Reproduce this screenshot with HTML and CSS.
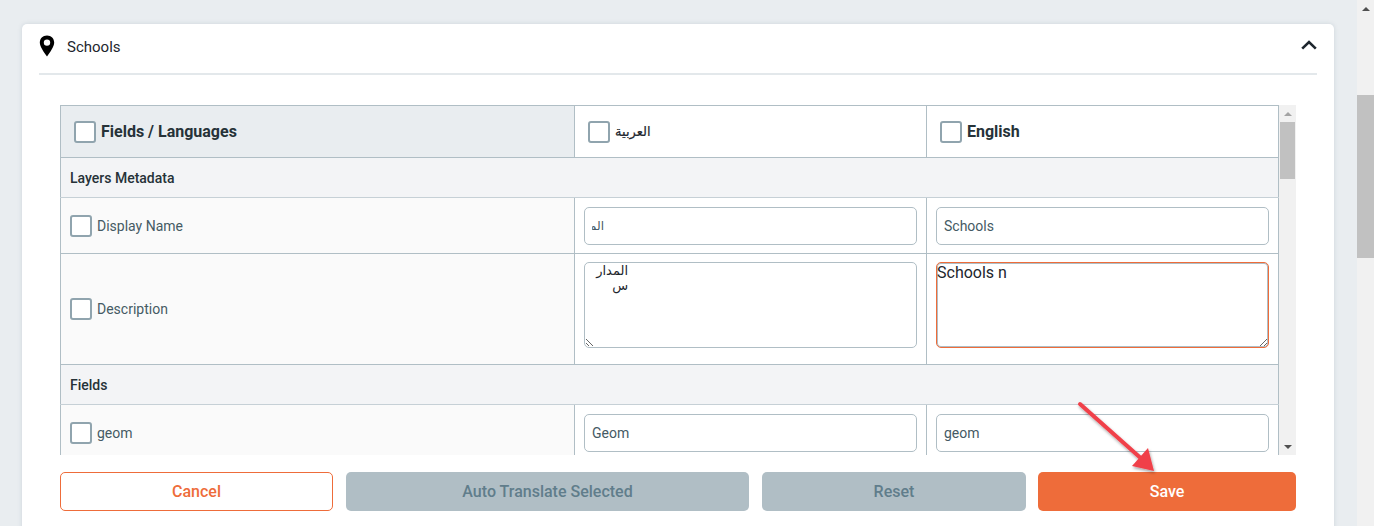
FILE: index.html
```html
<!DOCTYPE html>
<html lang="en">
<head>
    <meta charset="UTF-8">
    <meta name="viewport" content="width=device-width, initial-scale=1.0">
    <title>Layer translations</title>
    <link rel="stylesheet" href="styles.css">
</head>
<body>
    <div class="page">
        <div class="card">
            <div class="card-header">
                <svg class="pin-icon" width="16" height="22" viewBox="0 0 16 22">
                    <path fill-rule="evenodd" d="M8 0.5C3.7 0.5 0.8 3.6 0.8 7.6C0.8 11.8 4.8 17 8 21.5C11.2 17 15.2 11.8 15.2 7.6C15.2 3.6 12.3 0.5 8 0.5ZM8 4.4A3.2 3.2 0 1 1 8 10.8A3.2 3.2 0 1 1 8 4.4Z"/>
                </svg>
                <span class="card-title">Schools</span>
                <svg class="chevron-icon" width="16" height="10" viewBox="0 0 16 10">
                    <path d="M1.2 8.6L8 2L14.8 8.6" fill="none" stroke="#1d262d" stroke-width="2.6"/>
                </svg>
            </div>

            <div class="card-body">
                <div class="table-wrap">
                    <div class="table-clip">
                        <table class="lang-table">
                            <colgroup>
                                <col class="col-field">
                                <col class="col-lang">
                                <col class="col-lang">
                            </colgroup>
                            <tr class="head-row">
                                <th class="head-first"><label class="check-label"><span class="checkbox"></span>Fields / Languages</label></th>
                                <th><label class="check-label"><span class="checkbox"></span><span class="arabic-head" lang="ar" dir="rtl">العربية</span></label></th>
                                <th><label class="check-label"><span class="checkbox"></span>English</label></th>
                            </tr>
                            <tr class="section-row"><td colspan="3">Layers Metadata</td></tr>
                            <tr class="field-row">
                                <td><label class="check-label"><span class="checkbox"></span>Display Name</label></td>
                                <td><input class="text-input arabic-input" type="text" dir="rtl" value="المدارس"></td>
                                <td><input class="text-input" type="text" value="Schools"></td>
                            </tr>
                            <tr class="field-row desc-row">
                                <td><label class="check-label"><span class="checkbox"></span>Description</label></td>
                                <td><textarea class="text-area" dir="rtl">المدارس</textarea></td>
                                <td><textarea class="text-area is-focus">Schools n</textarea></td>
                            </tr>
                            <tr class="section-row"><td colspan="3">Fields</td></tr>
                            <tr class="field-row">
                                <td><label class="check-label"><span class="checkbox"></span>geom</label></td>
                                <td><input class="text-input" type="text" value="Geom"></td>
                                <td><input class="text-input" type="text" value="geom"></td>
                            </tr>
                        </table>
                    </div>
                    <div class="scrollbar">
                        <span class="arrow-up small"></span>
                        <div class="thumb table-thumb"></div>
                        <span class="arrow-down small"></span>
                    </div>
                </div>

                <div class="actions">
                    <button class="btn btn-cancel" type="button">Cancel</button>
                    <button class="btn btn-muted btn-translate" type="button">Auto Translate Selected</button>
                    <button class="btn btn-muted btn-reset" type="button">Reset</button>
                    <button class="btn btn-save" type="button">Save</button>
                </div>
            </div>
        </div>

        <div class="scrollbar page-scrollbar">
            <span class="arrow-up"></span>
            <div class="thumb page-thumb"></div>
        </div>
    </div>

    <!-- annotation arrow over the page -->
    <svg class="annotation" width="100" height="90" viewBox="0 0 100 90">
        <defs>
            <filter id="arrow-shadow" x="-20%" y="-20%" width="140%" height="140%">
                <feDropShadow dx="1" dy="2" stdDeviation="1.5" flood-color="#000" flood-opacity="0.35"/>
            </filter>
        </defs>
        <g filter="url(#arrow-shadow)" fill="#f0404a">
            <path d="M10 12L74 69" stroke="#f0404a" stroke-width="4" stroke-linecap="round"/>
            <path d="M84 79L62 74L78 56Z"/>
        </g>
    </svg>
</body>
</html>
```

FILE: styles.css
```css
* {
    margin: 0;
    padding: 0;
    box-sizing: border-box;
}

html, body {
    height: 526px;
    overflow: hidden;
}

body {
    font-family: Roboto, "DejaVu Sans", sans-serif;
    background: #e9edf0;
    color: #263238;
}

.page { display: flex; height: 526px; padding-left: 22px; }

/* card */
.card { width: 1312px; margin-top: 24px; height: 560px; background: #fff; border-radius: 5px; box-shadow: 0 0 4px rgba(120, 144, 156, 0.25); }
.card-header { height: 51px; margin: 0 17px; display: flex; align-items: center; border-bottom: 2px solid #e3e8eb; padding-bottom: 3px; }
.pin-icon { flex: none; margin-top: -2px; }
.card-title { margin-left: 12px; font-size: 15px; color: #1d262d; }
.chevron-icon { margin-left: auto; margin-top: -5px; }
.card-body { padding: 30px 38px 0; }

/* table + fake scrollbars */
.table-wrap { display: flex; height: 350px; }
.table-clip { width: 1219px; height: 350px; overflow: hidden; }
.lang-table { width: 1218px; table-layout: fixed; border-collapse: collapse; }
.col-field { width: 514px; }
.col-lang { width: 352px; }
.lang-table th, .lang-table td { border: 1px solid #b0bec5; }
.head-row { height: 52px; }
.head-row th { padding-left: 13px; text-align: left; font-size: 16px; font-weight: 700; color: #263238; }
.head-row .head-first { background: #e9edf0; }
.section-row { height: 40px; }
.section-row td { background: #f3f4f6; padding-left: 9px; font-size: 14px; font-weight: 500; color: #263238; border-bottom-color: #c6d0d6; }
.field-row { height: 56px; }
.field-row td { padding: 0 9px; font-size: 14px; color: #455a64; }
.field-row td:first-child { background: #fafafa; }
.desc-row { height: 111px; }
.desc-row td { vertical-align: top; padding-top: 8px; }
.desc-row td:first-child { vertical-align: middle; padding-top: 0; }

.check-label { display: flex; align-items: center; gap: 5px; }
.checkbox { flex: none; width: 22px; height: 22px; background: #fff; border: 2px solid #90a4ae; border-radius: 3px; }
.arabic-head { font-family: "DejaVu Sans", sans-serif; font-size: 13px; font-weight: 400; color: #1d262d; -webkit-text-stroke: 0.2px #1d262d; }

.text-input { display: block; width: 100%; height: 38px; padding: 0 7px; border: 1px solid #b0bec5; border-radius: 5px; background: #fff; font-family: Roboto, sans-serif; font-size: 14px; color: #455a64; outline: none; }
.arabic-input { direction: rtl; text-align: right; padding-right: 312px; font-family: "DejaVu Sans", sans-serif; font-size: 12px; }
.text-area { display: block; width: 100%; height: 86px; padding: 0; border: 1px solid #b0bec5; border-radius: 5px; background: #fff; font-family: Roboto, "DejaVu Sans", sans-serif; font-size: 16px; color: #1d262d; outline: none; resize: vertical; }
.text-area[dir="rtl"] { padding-right: 288px; font-size: 13px; text-align: right; }
.text-area.is-focus { border-color: #ee6c3a; box-shadow: inset 0 0 0 1px #b0bec5; }

.scrollbar { flex: none; width: 17px; display: flex; flex-direction: column; align-items: center; background: #f1f1f1; }
.thumb { background: #c1c1c1; }
.table-thumb { width: 15px; height: 57px; margin-top: 6px; }
.arrow-down { margin-top: auto; margin-bottom: 6px; }
.arrow-up { width: 0; height: 0; margin-top: 7px; border: 4px solid transparent; border-top: 0; border-bottom: 4px solid #505050; }
.arrow-down { width: 0; height: 0; border: 4px solid transparent; border-bottom: 0; border-top: 4px solid #505050; }
.arrow-up.small { margin-top: 7px; border-bottom-color: #a3a3a3; }

.page-scrollbar { margin-left: 23px; height: 526px; }
.page-thumb { width: 17px; height: 163px; margin-top: 84px; }

/* buttons */
.actions { display: flex; margin-top: 17px; }
.btn { height: 39px; border-radius: 5px; border: 1px solid transparent; font-family: Roboto, sans-serif; font-size: 16px; font-weight: 500; cursor: pointer; }
.btn-cancel { width: 273px; margin-right: 13px; background: #fff; border-color: #ee6c3a; color: #ee6c3a; }
.btn-muted { background: #b0bec5; color: #607d8b; }
.btn-translate { width: 403px; margin-right: 13px; }
.btn-reset { width: 264px; margin-right: 12px; }
.btn-save { width: 258px; background: #ee6c3a; color: #fff; }

.annotation { position: absolute; left: 1070px; top: 392px; }
```
